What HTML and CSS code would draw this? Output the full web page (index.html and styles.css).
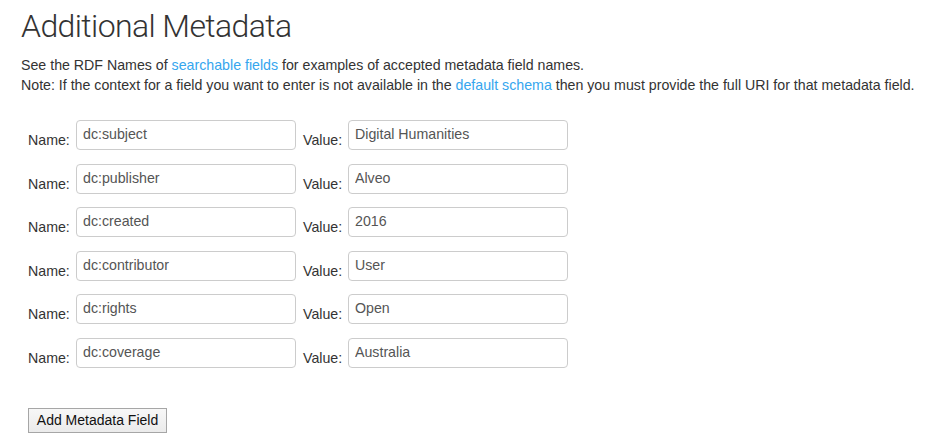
FILE: index.html
```html
<!DOCTYPE html>
<html>
<head>
<meta charset="utf-8">
<link rel="stylesheet" href="styles.css">
</head>
<body>
<div class="page">
  <h1 class="title">Additional Metadata</h1>
  <p class="intro">See the RDF Names of <a href="#">searchable fields</a> for examples of accepted metadata field names.<br>Note: If the context for a field you want to enter is not available in the <a href="#">default schema</a> then you must provide the full URI for that metadata field.</p>
  <div class="fields">
    <div class="row"><span class="label name-label">Name:</span><input class="field" value="dc:subject"><span class="label value-label">Value:</span><input class="field" value="Digital Humanities"></div>
    <div class="row"><span class="label name-label">Name:</span><input class="field" value="dc:publisher"><span class="label value-label">Value:</span><input class="field" value="Alveo"></div>
    <div class="row"><span class="label name-label">Name:</span><input class="field" value="dc:created"><span class="label value-label">Value:</span><input class="field" value="2016"></div>
    <div class="row"><span class="label name-label">Name:</span><input class="field" value="dc:contributor"><span class="label value-label">Value:</span><input class="field" value="User"></div>
    <div class="row"><span class="label name-label">Name:</span><input class="field" value="dc:rights"><span class="label value-label">Value:</span><input class="field" value="Open"></div>
    <div class="row"><span class="label name-label">Name:</span><input class="field" value="dc:coverage"><span class="label value-label">Value:</span><input class="field" value="Australia"></div>
  </div>
  <button class="add-btn" type="button">Add Metadata Field</button>
</div>
</body>
</html>
```
FILE: styles.css
```css
html, body {
  margin: 0;
  padding: 0;
  background: #ffffff;
}
body {
  font-family: "Liberation Sans", Arial, sans-serif;
  color: #333333;
}
.page {
  padding: 0 0 0 21px;
}
.title {
  margin: 0;
  padding-top: 6px;
  font-family: Roboto, "Liberation Sans", sans-serif;
  font-weight: 300;
  font-size: 32px;
  letter-spacing: -0.6px;
  line-height: 40px;
  color: #333333;
}
.intro {
  margin: 9px 0 0 0;
  font-size: 14.2px;
  line-height: 20px;
}
.intro a {
  color: #35a6ee;
  text-decoration: none;
}
.fields {
  margin-top: 25px;
  padding-left: 7px;
  display: flex;
  flex-direction: column;
  gap: 13.6px;
}
.row {
  display: flex;
  align-items: flex-end;
  height: 30px;
}
.label {
  font-size: 14.2px;
  line-height: 14px;
  color: #333333;
  padding-bottom: 3px;
}
.name-label {
  width: 48px;
}
.value-label {
  width: 45px;
  margin-left: 7px;
}
.field {
  box-sizing: border-box;
  width: 220px;
  height: 30px;
  margin: 0;
  padding: 0 6px 2px 6px;
  border: 1px solid #cccccc;
  border-radius: 4px;
  font-family: "Liberation Sans", Arial, sans-serif;
  font-size: 14.2px;
  color: #555555;
  background: #ffffff;
  outline: none;
}
.add-btn {
  display: block;
  margin: 40px 0 0 7px;
  box-sizing: border-box;
  width: 139px;
  height: 25px;
  padding: 0;
  border: 1px solid #a6a6a6;
  border-radius: 0;
  background: linear-gradient(#f7f7f7, #ebebeb);
  font-family: "Liberation Sans", Arial, sans-serif;
  font-size: 14px;
  color: #111111;
}
```
